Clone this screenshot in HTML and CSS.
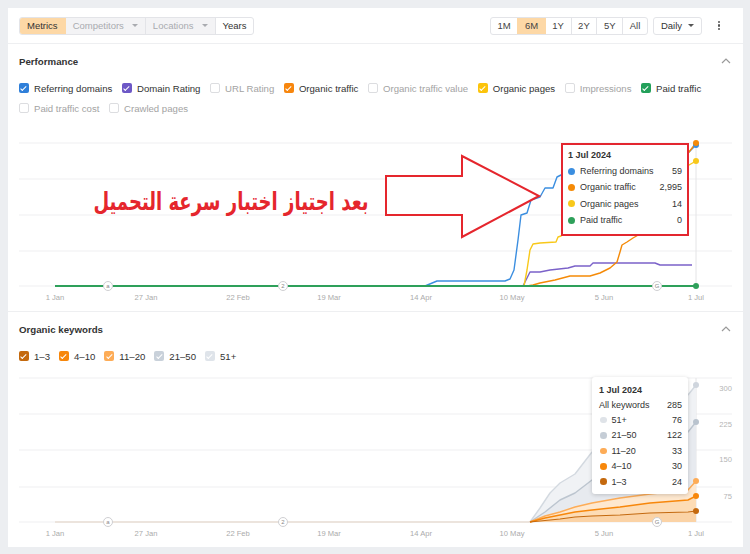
FILE: index.html
```html
<!DOCTYPE html>
<html lang="en">
<head>
<meta charset="utf-8">
<title>Performance</title>
<link rel="stylesheet" href="styles.css">
</head>
<body>
<div class="page">
  <div class="card">
    <div class="toolbar">
      <div class="seg">
        <span class="seg-i active">Metrics</span>
        <span class="seg-i dis">Competitors <i class="caret"></i></span>
        <span class="seg-i dis">Locations <i class="caret"></i></span>
        <span class="seg-i">Years</span>
      </div>
      <div class="tb-right">
        <div class="seg seg-range">
          <span class="seg-i">1M</span>
          <span class="seg-i active">6M</span>
          <span class="seg-i">1Y</span>
          <span class="seg-i">2Y</span>
          <span class="seg-i">5Y</span>
          <span class="seg-i">All</span>
        </div>
        <div class="dd">Daily <i class="caret dark"></i></div>
        <div class="kebab"><i></i><i></i><i></i></div>
      </div>
    </div>

    <section class="sec sec-perf">
      <div class="sec-head">
        <h2>Performance</h2>
        <svg class="chev" width="10" height="6" viewBox="0 0 10 6"><path d="M1 5 L5 1 L9 5" fill="none" stroke="#9a9a9a" stroke-width="1.2"/></svg>
      </div>
      <div class="legend legend-perf">
        <span class="lg"><i class="cb on c-blue"></i>Referring domains</span>
        <span class="lg"><i class="cb on c-purple"></i>Domain Rating</span>
        <span class="lg off"><i class="cb"></i>URL Rating</span>
        <span class="lg"><i class="cb on c-orange"></i>Organic traffic</span>
        <span class="lg off"><i class="cb"></i>Organic traffic value</span>
        <span class="lg"><i class="cb on c-yellow"></i>Organic pages</span>
        <span class="lg off"><i class="cb"></i>Impressions</span>
        <span class="lg"><i class="cb on c-green"></i>Paid traffic</span>
        <span class="lg off"><i class="cb"></i>Paid traffic cost</span>
        <span class="lg off"><i class="cb"></i>Crawled pages</span>
      </div>
      <svg class="chart" width="735" height="193" viewBox="8 118 735 193">
        <g class="grid">
          <line x1="19" y1="143" x2="732" y2="143"/>
          <line x1="19" y1="179" x2="732" y2="179"/>
          <line x1="19" y1="215" x2="732" y2="215"/>
          <line x1="19" y1="251" x2="732" y2="251"/>
          <line x1="19" y1="286" x2="732" y2="286"/>
        </g>
        <line class="hover" x1="696" y1="143" x2="696" y2="286"/>
        <path class="ln blue" d="M425 286 L437 281 L505 281 L510 279 L514 270 L518 240 L521 215 L527 213 L531 200 L540 197 L545 188 L553 188 L557 177 L561 175 L600 170 L640 165 L689 152 L696 145"/>
        <path class="ln purple" d="M523 286 L527 278 L530 272 L540 272 L550 270 L568 268 L575 266 L590 266 L593 263 L655 263 L660 265 L692 265"/>
        <path class="ln yellow" d="M524 286 L527 270 L530 250 L533 244 L540 243 L556 242 L558 237 L561 236 L600 200 L689 165 L696 161"/>
        <path class="ln orange" d="M527 286 L533 285 L540 283 L555 280 L570 276 L590 276 L600 273 L610 268 L617 262 L620 252 L622 245 L627 242 L633 238 L640 234 L660 200 L689 152 L696 143"/>
        <path class="ln green" d="M55 286 L696 286"/>
        <circle cx="696" cy="145" r="3" fill="#3b8ee0"/>
        <circle cx="696" cy="143" r="3" fill="#f58a07"/>
        <circle cx="696" cy="161" r="3" fill="#f8c81a"/>
        <circle cx="696" cy="286" r="3" fill="#2ea05a"/>
        <g class="ann">
          <circle cx="108" cy="286" r="4.5"/><text x="108" y="288">a</text>
          <circle cx="283" cy="286" r="4.5"/><text x="283" y="288">2</text>
          <circle cx="657" cy="286" r="4.5"/><text x="657" y="288">G</text>
        </g>
        <g class="xl">
          <text x="55" y="300">1 Jan</text>
          <text x="146" y="300">27 Jan</text>
          <text x="238" y="300">22 Feb</text>
          <text x="329" y="300">19 Mar</text>
          <text x="421" y="300">14 Apr</text>
          <text x="512" y="300">10 May</text>
          <text x="604" y="300">5 Jun</text>
          <text x="696" y="300">1 Jul</text>
        </g>
      </svg>
    </section>

    <section class="sec sec-kw">
      <div class="sec-head">
        <h2>Organic keywords</h2>
        <svg class="chev" width="10" height="6" viewBox="0 0 10 6"><path d="M1 5 L5 1 L9 5" fill="none" stroke="#9a9a9a" stroke-width="1.2"/></svg>
      </div>
      <div class="legend legend-kw">
        <span class="lg"><i class="cb on k1"></i>1–3</span>
        <span class="lg"><i class="cb on k2"></i>4–10</span>
        <span class="lg"><i class="cb on k3"></i>11–20</span>
        <span class="lg"><i class="cb on k4"></i>21–50</span>
        <span class="lg"><i class="cb on k5"></i>51+</span>
      </div>
      <svg class="chart" width="735" height="181" viewBox="8 366 735 181">
        <g class="grid">
          <line x1="19" y1="378" x2="732" y2="378"/>
          <line x1="19" y1="414" x2="732" y2="414"/>
          <line x1="19" y1="450" x2="732" y2="450"/>
          <line x1="19" y1="487" x2="732" y2="487"/>
          <line x1="19" y1="522" x2="732" y2="522"/>
        </g>
        <g class="yl">
          <text x="732" y="391">300</text>
          <text x="732" y="427">225</text>
          <text x="732" y="462">150</text>
          <text x="732" y="499">75</text>
        </g>
        <line class="hover" x1="696" y1="378" x2="696" y2="522"/>
        <path class="area a5" d="M530 522 L540 508 L550 493 L560 483 L575 474 L592 452 L620 432 L650 415 L688 395 L696 385 L696 422 L688 432 L650 450 L620 465 L592 480 L575 493 L560 500 L545 512 L530 522 Z"/>
        <path class="area a4" d="M530 522 L545 512 L560 500 L575 493 L592 480 L620 465 L650 450 L688 432 L696 422 L696 481 L688 490 L650 494 L620 498 L592 503 L575 507 L560 512 L545 516 L530 522 Z"/>
        <path class="area a3" d="M530 522 L545 516 L560 512 L575 507 L592 503 L620 498 L650 494 L688 490 L696 481 L696 496 L688 500 L650 503 L620 507 L592 510 L575 512 L560 515 L545 518 L530 522 Z"/>
        <path class="area a2" d="M530 522 L545 518 L560 515 L575 512 L592 510 L620 507 L650 503 L688 500 L696 496 L696 511 L688 512 L650 513 L620 515 L592 516 L575 517 L560 519 L530 522 Z"/>
        <path class="area a1" d="M530 522 L560 519 L575 517 L592 516 L620 515 L650 513 L688 512 L696 511 L696 522 Z"/>
        <line class="base-kw" x1="55" y1="522" x2="530" y2="522"/>
        <path class="ln kl5" d="M530 522 L540 508 L550 493 L560 483 L575 474 L592 452 L620 432 L650 415 L688 395 L696 385"/>
        <path class="ln kl4" d="M530 522 L545 512 L560 500 L575 493 L592 480 L620 465 L650 450 L688 432 L696 422"/>
        <path class="ln kl3" d="M530 522 L545 516 L560 512 L575 507 L592 503 L620 498 L650 494 L688 490 L696 481"/>
        <path class="ln kl2" d="M530 522 L545 518 L560 515 L575 512 L592 510 L620 507 L650 503 L688 500 L696 496"/>
        <path class="ln kl1" d="M530 522 L560 519 L575 517 L592 516 L620 515 L650 513 L688 512 L696 511"/>
        <circle cx="696" cy="385" r="3" fill="#cfd5dd"/>
        <circle cx="696" cy="422" r="3" fill="#b9c3ce"/>
        <circle cx="696" cy="481" r="3" fill="#fdac57"/>
        <circle cx="696" cy="496" r="3" fill="#f7870b"/>
        <circle cx="696" cy="511" r="3" fill="#c4690e"/>
        <g class="ann">
          <circle cx="108" cy="522" r="4.5"/><text x="108" y="524">a</text>
          <circle cx="283" cy="522" r="4.5"/><text x="283" y="524">2</text>
          <circle cx="657" cy="522" r="4.5"/><text x="657" y="524">G</text>
        </g>
        <g class="xl">
          <text x="55" y="536">1 Jan</text>
          <text x="146" y="536">27 Jan</text>
          <text x="238" y="536">22 Feb</text>
          <text x="329" y="536">19 Mar</text>
          <text x="421" y="536">14 Apr</text>
          <text x="512" y="536">10 May</text>
          <text x="604" y="536">5 Jun</text>
          <text x="696" y="536">1 Jul</text>
        </g>
      </svg>
    </section>

    <svg class="arrow" width="160" height="88" viewBox="383 153 160 88">
      <path d="M386 176 L462 176 L462 156 L539 196 L462 237 L462 215 L386 215 Z" fill="#fff" stroke="#e5262d" stroke-width="2" stroke-linejoin="miter"/>
    </svg>
    <div class="ar" dir="rtl" lang="ar">بعد اجتياز اختبار سرعة التحميل</div>

    <div class="tip tip1">
      <div class="tt">1 Jul 2024</div>
      <div class="tr"><i class="dot" style="background:#3b8ee0"></i><span>Referring domains</span><b>59</b></div>
      <div class="tr"><i class="dot" style="background:#f58a07"></i><span>Organic traffic</span><b>2,995</b></div>
      <div class="tr"><i class="dot" style="background:#f8c81a"></i><span>Organic pages</span><b>14</b></div>
      <div class="tr"><i class="dot" style="background:#2ea05a"></i><span>Paid traffic</span><b>0</b></div>
    </div>

    <div class="tip tip2">
      <div class="tt">1 Jul 2024</div>
      <div class="tr"><span>All keywords</span><b>285</b></div>
      <div class="tr"><i class="dot" style="background:#dfe3e8"></i><span>51+</span><b>76</b></div>
      <div class="tr"><i class="dot" style="background:#c5cdd6"></i><span>21–50</span><b>122</b></div>
      <div class="tr"><i class="dot" style="background:#fdac57"></i><span>11–20</span><b>33</b></div>
      <div class="tr"><i class="dot" style="background:#f7870b"></i><span>4–10</span><b>30</b></div>
      <div class="tr"><i class="dot" style="background:#c4690e"></i><span>1–3</span><b>24</b></div>
    </div>
  </div>
</div>
</body>
</html>
```

FILE: styles.css
```css
html, body {
  margin: 0;
  padding: 0;
  background: #eceef1;
  font-family: "Liberation Sans", Arial, sans-serif;
  color: #333;
}

.page {
  padding: 8px 7px 7px 8px;
}

.card {
  position: relative;
  width: 735px;
  height: 539px;
  background: #fff;
}

/* toolbar */
.toolbar {
  height: 35px;
  display: flex;
  align-items: center;
  justify-content: space-between;
  padding: 0 19px 0 11px;
  border-bottom: 1px solid #eeeff1;
}

.seg {
  display: flex;
  height: 18px;
  box-sizing: border-box;
  border: 1px solid #e3e4e8;
  border-radius: 3px;
  overflow: hidden;
}

.seg-i {
  display: flex;
  align-items: center;
  justify-content: center;
  gap: 8px;
  padding: 0 7px;
  font-size: 9.5px;
  color: #333;
  border-left: 1px solid #e3e4e8;
}

.seg-range .seg-i {
  padding: 0 6.6px;
  color: #444;
}

.seg-i:first-child {
  border-left: 0;
}

.seg-i.active {
  background: #fdd8a6;
  border-left-color: #fdd8a6;
}

.seg-i.active + .seg-i {
  border-left-color: #fdd8a6;
}

.seg-i.dis {
  background: #f3f3f5;
  color: #a9abb0;
}

.caret {
  display: block;
  width: 0;
  height: 0;
  border-left: 3px solid transparent;
  border-right: 3px solid transparent;
  border-top: 3px solid #a9abb0;
}

.caret.dark {
  border-top-color: #555;
}

.tb-right {
  display: flex;
  align-items: center;
  gap: 5px;
}

.dd {
  height: 18px;
  box-sizing: border-box;
  border: 1px solid #e3e4e8;
  border-radius: 3px;
  display: flex;
  align-items: center;
  gap: 6px;
  padding: 0 7px;
  font-size: 9.5px;
  color: #333;
}

.kebab {
  width: 10px;
  margin-left: 7px;
  display: flex;
  flex-direction: column;
  align-items: center;
  gap: 1.5px;
}

.kebab i {
  display: block;
  width: 2.2px;
  height: 2.2px;
  border-radius: 50%;
  background: #555;
}

/* sections */
.sec-perf {
  border-bottom: 1px solid #eeeff1;
}

.sec-head {
  height: 34px;
  display: flex;
  align-items: center;
  justify-content: space-between;
  padding: 0 12px 0 11px;
}

.sec-head h2 {
  margin: 0;
  font-size: 9.7px;
  font-weight: bold;
  color: #333;
}

.chev {
  display: block;
}

.legend {
  display: flex;
  flex-wrap: wrap;
  align-content: flex-start;
  column-gap: 9.6px;
  padding: 0 12px 0 11px;
}

.legend-perf {
  height: 40px;
}

.legend-kw {
  height: 20px;
  column-gap: 9px;
}

.lg {
  display: flex;
  align-items: center;
  gap: 5px;
  height: 20px;
  font-size: 9.6px;
  color: #333;
  white-space: nowrap;
}

.lg.off {
  color: #a3a3a3;
}

.cb {
  position: relative;
  display: block;
  width: 10px;
  height: 10px;
  box-sizing: border-box;
  border-radius: 2px;
  border: 1px solid #dcdde0;
  background: #fff;
}

.cb.on {
  border: 0;
}

.cb.on::after {
  content: "";
  position: absolute;
  left: 3.4px;
  top: 1.6px;
  width: 2.2px;
  height: 4.6px;
  border: solid #fff;
  border-width: 0 1.4px 1.4px 0;
  transform: rotate(45deg);
}

.c-blue { background: #2f7fd9; }
.c-purple { background: #6d58c6; }
.c-orange { background: #f7860d; }
.c-yellow { background: #fcc40c; }
.c-green { background: #23a05a; }
.k1 { background: #c4690e; }
.k2 { background: #f7870b; }
.k3 { background: #fdac57; }
.k4 { background: #c9d1da; }
.k5 { background: #dfe4ea; }

/* charts */
.chart {
  display: block;
}

.grid line {
  stroke: #efeff1;
  stroke-width: 1;
}

.hover {
  stroke: #e4e4e6;
  stroke-width: 1;
}

.base-kw {
  stroke: #e2d2c2;
  stroke-width: 1.2;
}

.ln {
  fill: none;
  stroke-width: 1.4;
  stroke-linejoin: round;
}

.blue { stroke: #3b8ee0; }
.purple { stroke: #7b62c9; }
.orange { stroke: #f58a07; }
.yellow { stroke: #f8c81a; }
.green { stroke: #2ea05a; stroke-width: 1.8; }

.kl5 { stroke: #d3d9e0; }
.kl4 { stroke: #bcc5cf; }
.kl3 { stroke: #fdac57; }
.kl2 { stroke: #f7870b; }
.kl1 { stroke: #c4690e; stroke-width: 1.2; }

.area { stroke: none; }
.a5 { fill: #f0f2f5; }
.a4 { fill: #e7eaef; }
.a3 { fill: #fee8cf; }
.a2 { fill: #fddcb5; }
.a1 { fill: #fbd3a6; }

.ann circle {
  fill: #fff;
  stroke: #cfcfd2;
  stroke-width: 1;
}

.ann text {
  font-family: "Liberation Sans", Arial, sans-serif;
  font-size: 6px;
  fill: #888;
  text-anchor: middle;
}

.xl text {
  font-family: "Liberation Sans", Arial, sans-serif;
  font-size: 7.6px;
  fill: #ababab;
  text-anchor: middle;
}

.yl text {
  font-family: "Liberation Sans", Arial, sans-serif;
  font-size: 7.6px;
  fill: #b5b5b5;
  text-anchor: end;
}

/* overlays */
.arrow {
  position: absolute;
  left: 375px;
  top: 145px;
}

.ar {
  position: absolute;
  left: 23px;
  top: 176px;
  width: 400px;
  text-align: center;
  font-family: "DejaVu Sans", sans-serif;
  font-weight: bold;
  font-size: 25px;
  line-height: 36px;
  color: #e5262d;
  white-space: nowrap;
  transform: scaleX(0.72);
  transform-origin: 50% 50%;
}

.tip {
  position: absolute;
  box-sizing: border-box;
  background: #fff;
  font-size: 9px;
  color: #333;
}

.tip1 {
  left: 553px;
  top: 135px;
  width: 128px;
  height: 93px;
  border: 2px solid #e3262f;
  padding: 4px 5px 0 5px;
}

.tip2 {
  left: 584px;
  top: 369px;
  width: 96px;
  height: 117px;
  border-radius: 3px;
  box-shadow: 0 1px 4px rgba(0, 0, 0, 0.18);
  padding: 7px 6px 0 7px;
}

.tt {
  font-weight: bold;
  height: 12px;
  line-height: 12px;
}

.tip1 .tr {
  height: 16.3px;
}

.tip2 .tr {
  height: 15.4px;
}

.tr {
  display: flex;
  align-items: center;
  gap: 5px;
}

.tip1 .tt {
  margin-bottom: 2px;
}

.tip2 .tt {
  margin-bottom: 1px;
}

.tr span {
  flex: 1;
}

.tr b {
  font-weight: normal;
}

.dot {
  display: block;
  width: 7px;
  height: 7px;
  border-radius: 50%;
}

.tip2 .dot {
  width: 6.5px;
  height: 6.5px;
  margin-left: 1px;
}
```
